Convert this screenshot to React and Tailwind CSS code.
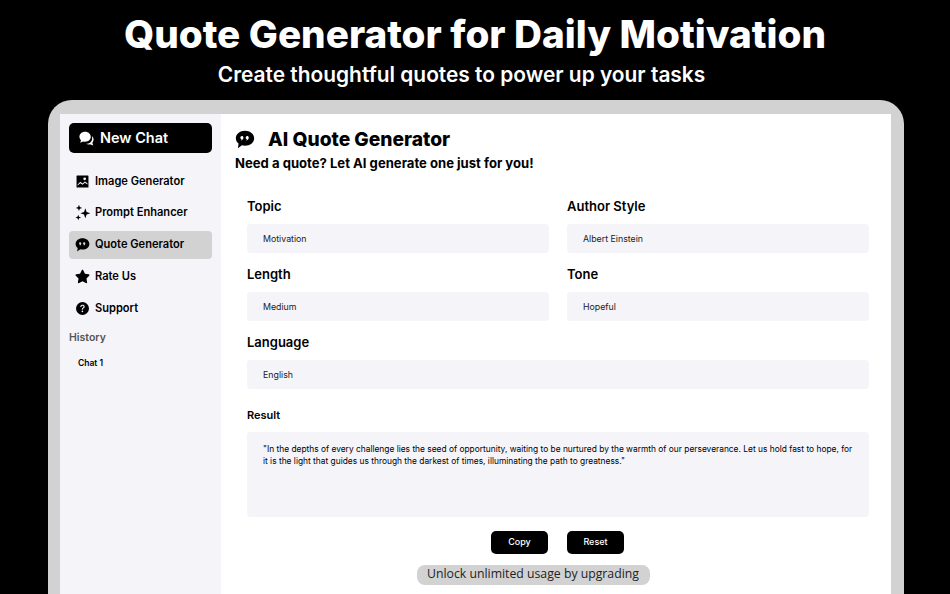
import { BsQuestionCircleFill } from "react-icons/bs";
import { FaStar } from "react-icons/fa";

const font = "font-['Inter','Liberation_Sans',sans-serif]";

const ChatsIcon = () => (
  <svg viewBox="0 0 24 24" width="17" height="17" fill="currentColor" className="mr-[5px]">
    <path d="M10 2.500c4.700 0 8 3 8 7s-3.300 7-8 7c-1 0-1.900-.100-2.800-.400L3 18l1.300-3.700C2.900 13 2 11.300 2 9.500c0-4 3.300-7 8-7z" />
    <path d="M19.500 8.500c1.600 1.200 2.500 3 2.500 5 0 1.700-.700 3.200-1.800 4.400L21.500 22l-4.600-2c-1.500.500-3.500.500-5.400-.500 4.500 0 8.500-3 8.500-8 0-1-.100-2-.500-3z" />
  </svg>
);

const QuoteIcon = ({ size }) => (
  <svg viewBox="0 0 24 24" width={size} height={size} fill="currentColor">
    <path
      fillRule="evenodd"
      d="M12 2c6.100 0 11 3.800 11 9s-4.900 9-11 9c-1.300 0-2.500-.200-3.700-.500L3.500 23l.8-5.600C2.200 15.800 1 13.500 1 11c0-5.200 4.900-9 11-9zM8.300 8.500a1.900 1.900 0 0 0-1.900 1.900c0 1 .800 1.800 1.700 1.900-.200.800-.700 1.300-1.300 1.700 1.900-.200 3.300-1.800 3.300-3.700 0-1-.800-1.800-1.800-1.800zm6.400 0a1.900 1.900 0 0 0-1.900 1.900c0 1 .800 1.800 1.700 1.900-.200.800-.700 1.300-1.300 1.700 1.900-.200 3.300-1.800 3.300-3.700 0-1-.800-1.800-1.800-1.800z"
    />
  </svg>
);

const ImageIcon = () => (
  <svg viewBox="0 0 24 24" width="13" height="13" fill="currentColor">
    <path
      fillRule="evenodd"
      d="M2 1h20a1 1 0 0 1 1 1v20a1 1 0 0 1-1 1H2a1 1 0 0 1-1-1V2a1 1 0 0 1 1-1zm14 3.500a2.500 2.500 0 1 0 0 5 2.500 2.500 0 0 0 0-5zM3 17.500v2l5-4.500 4 3 4.500-3.500 4.500 3v-2.200L16.500 12 12 15.500 8 12.500z"
    />
  </svg>
);

const SparkIcon = () => (
  <svg viewBox="0 0 24 24" width="17" height="17" fill="currentColor">
    <path d="M16 6l1.800 5.200L23 13l-5.200 1.800L16 20l-1.800-5.200L9 13l5.200-1.800z" />
    <path d="M7 1l1.200 3.300L11.500 5.500 8.200 6.700 7 10 5.800 6.700 2.500 5.500l3.300-1.200z" />
    <path d="M6 15l1.100 2.900L10 19l-2.900 1.100L6 23l-1.100-2.900L2 19l2.900-1.100z" />
  </svg>
);

const navItems = [
  { label: "Image Generator", icon: <ImageIcon /> },
  { label: "Prompt Enhancer", icon: <SparkIcon /> },
  { label: "Quote Generator", icon: <QuoteIcon size={15} />, active: true },
  { label: "Rate Us", icon: <FaStar size={15} /> },
  { label: "Support", icon: <BsQuestionCircleFill size={13} /> },
];

const Field = ({ label, value }) => (
  <div className="flex flex-col">
    <label className="h-[18px] text-[13px] leading-[18px] font-semibold text-black">{label}</label>
    <div className="mt-[9px] flex h-[29px] items-center rounded-[4px] bg-[#f4f4f9] pl-4 text-[8.800px] text-[#222]">
      {value}
    </div>
  </div>
);

const Sidebar = () => (
  <aside className="flex w-[161px] flex-shrink-0 flex-col bg-[#f4f4f9] px-[9px] pt-[9px]">
    <button className="flex h-[30px] items-center rounded-[5px] bg-black pl-[9px] text-[14.500px] font-semibold text-white">
      <ChatsIcon />
      New Chat
    </button>
    <nav className="mt-[14px] flex flex-col gap-[3.750px]">
      {navItems.map((item) => (
        <div
          key={item.label}
          className={`flex h-[28px] items-center rounded-[4px] text-[11.100px] font-semibold text-black ${item.active ? "bg-[#d2d2d2]" : ""}`}>
          <span className="flex w-[26px] justify-center">{item.icon}</span>
          {item.label}
        </div>
      ))}
    </nav>
    <div className="mt-[8px] text-[10.500px] font-semibold text-[#555]">History</div>
    <div className="mt-[11px] pl-[9px] text-[8.500px] font-semibold text-black">Chat 1</div>
  </aside>
);

const Main = () => (
  <main className="flex flex-1 flex-col bg-white pt-[11px]">
    <div className="flex h-[28px] items-center pl-[14px]">
      <QuoteIcon size={20} />
      <h1 className="ml-[13px] text-[19.200px] font-extrabold text-black">AI Quote Generator</h1>
    </div>
    <p className="mt-[1px] pl-[14px] text-[13.100px] font-bold text-black">Need a quote? Let AI generate one just for you!</p>
    <div className="mt-[23px] flex flex-col gap-[12px] pl-[26px] pr-[22px]">
      <div className="grid grid-cols-2 gap-x-[18px]">
        <Field label="Topic" value="Motivation" />
        <Field label="Author Style" value="Albert Einstein" />
      </div>
      <div className="grid grid-cols-2 gap-x-[18px]">
        <Field label="Length" value="Medium" />
        <Field label="Tone" value="Hopeful" />
      </div>
      <Field label="Language" value="English" />
      <div className="mt-[6px]">
        <label className="block h-[16px] text-[11px] leading-[16px] font-semibold text-black">Result</label>
        <div className="mt-[9px] h-[85px] rounded-[4px] bg-[#f4f4f9] pl-4 pr-[12px] pt-[11px] text-[8.400px] leading-[12.500px] text-black">
          "In the depths of every challenge lies the seed of opportunity, waiting to be nurtured by the warmth of our perseverance. Let us hold fast to hope, for it is the light that guides us through the darkest of times, illuminating the path to greatness."
        </div>
      </div>
    </div>
    <div className="mt-[14px] flex justify-center gap-[19px] pl-[3px]">
      <button className="h-[23px] w-[57px] rounded-[5px] bg-black text-[9px] font-medium text-white">Copy</button>
      <button className="h-[23px] w-[57px] rounded-[5px] bg-black text-[9px] font-medium text-white">Reset</button>
    </div>
    <div className="mt-[11px] flex justify-center pr-[46px]">
      <span className="flex h-[20px] w-[233px] items-center justify-center rounded-[8px] bg-[#d2d2d2] font-['Open_Sans',sans-serif] text-[12.250px] text-[#222]">
        Unlock unlimited usage by upgrading
      </span>
    </div>
  </main>
);

export default function App() {
  return (
    <div className={`flex h-[594px] w-[950px] flex-col overflow-hidden bg-black ${font}`}>
      <header className="flex h-[100px] flex-shrink-0 flex-col items-center pt-[10px] text-white">
        <h1 className="text-[38.700px] leading-[48px] font-extrabold">Quote Generator for Daily Motivation</h1>
        <h2 className="pr-[27px] text-[20.900px] leading-[34px] font-semibold">Create thoughtful quotes to power up your tasks</h2>
      </header>
      <div className="ml-[48px] mr-[46px] flex flex-1 rounded-t-[24px] border-t-[14px] border-r-[13px] border-l-[12px] border-[#d2d2d2]">
        <Sidebar />
        <Main />
      </div>
    </div>
  );
}
